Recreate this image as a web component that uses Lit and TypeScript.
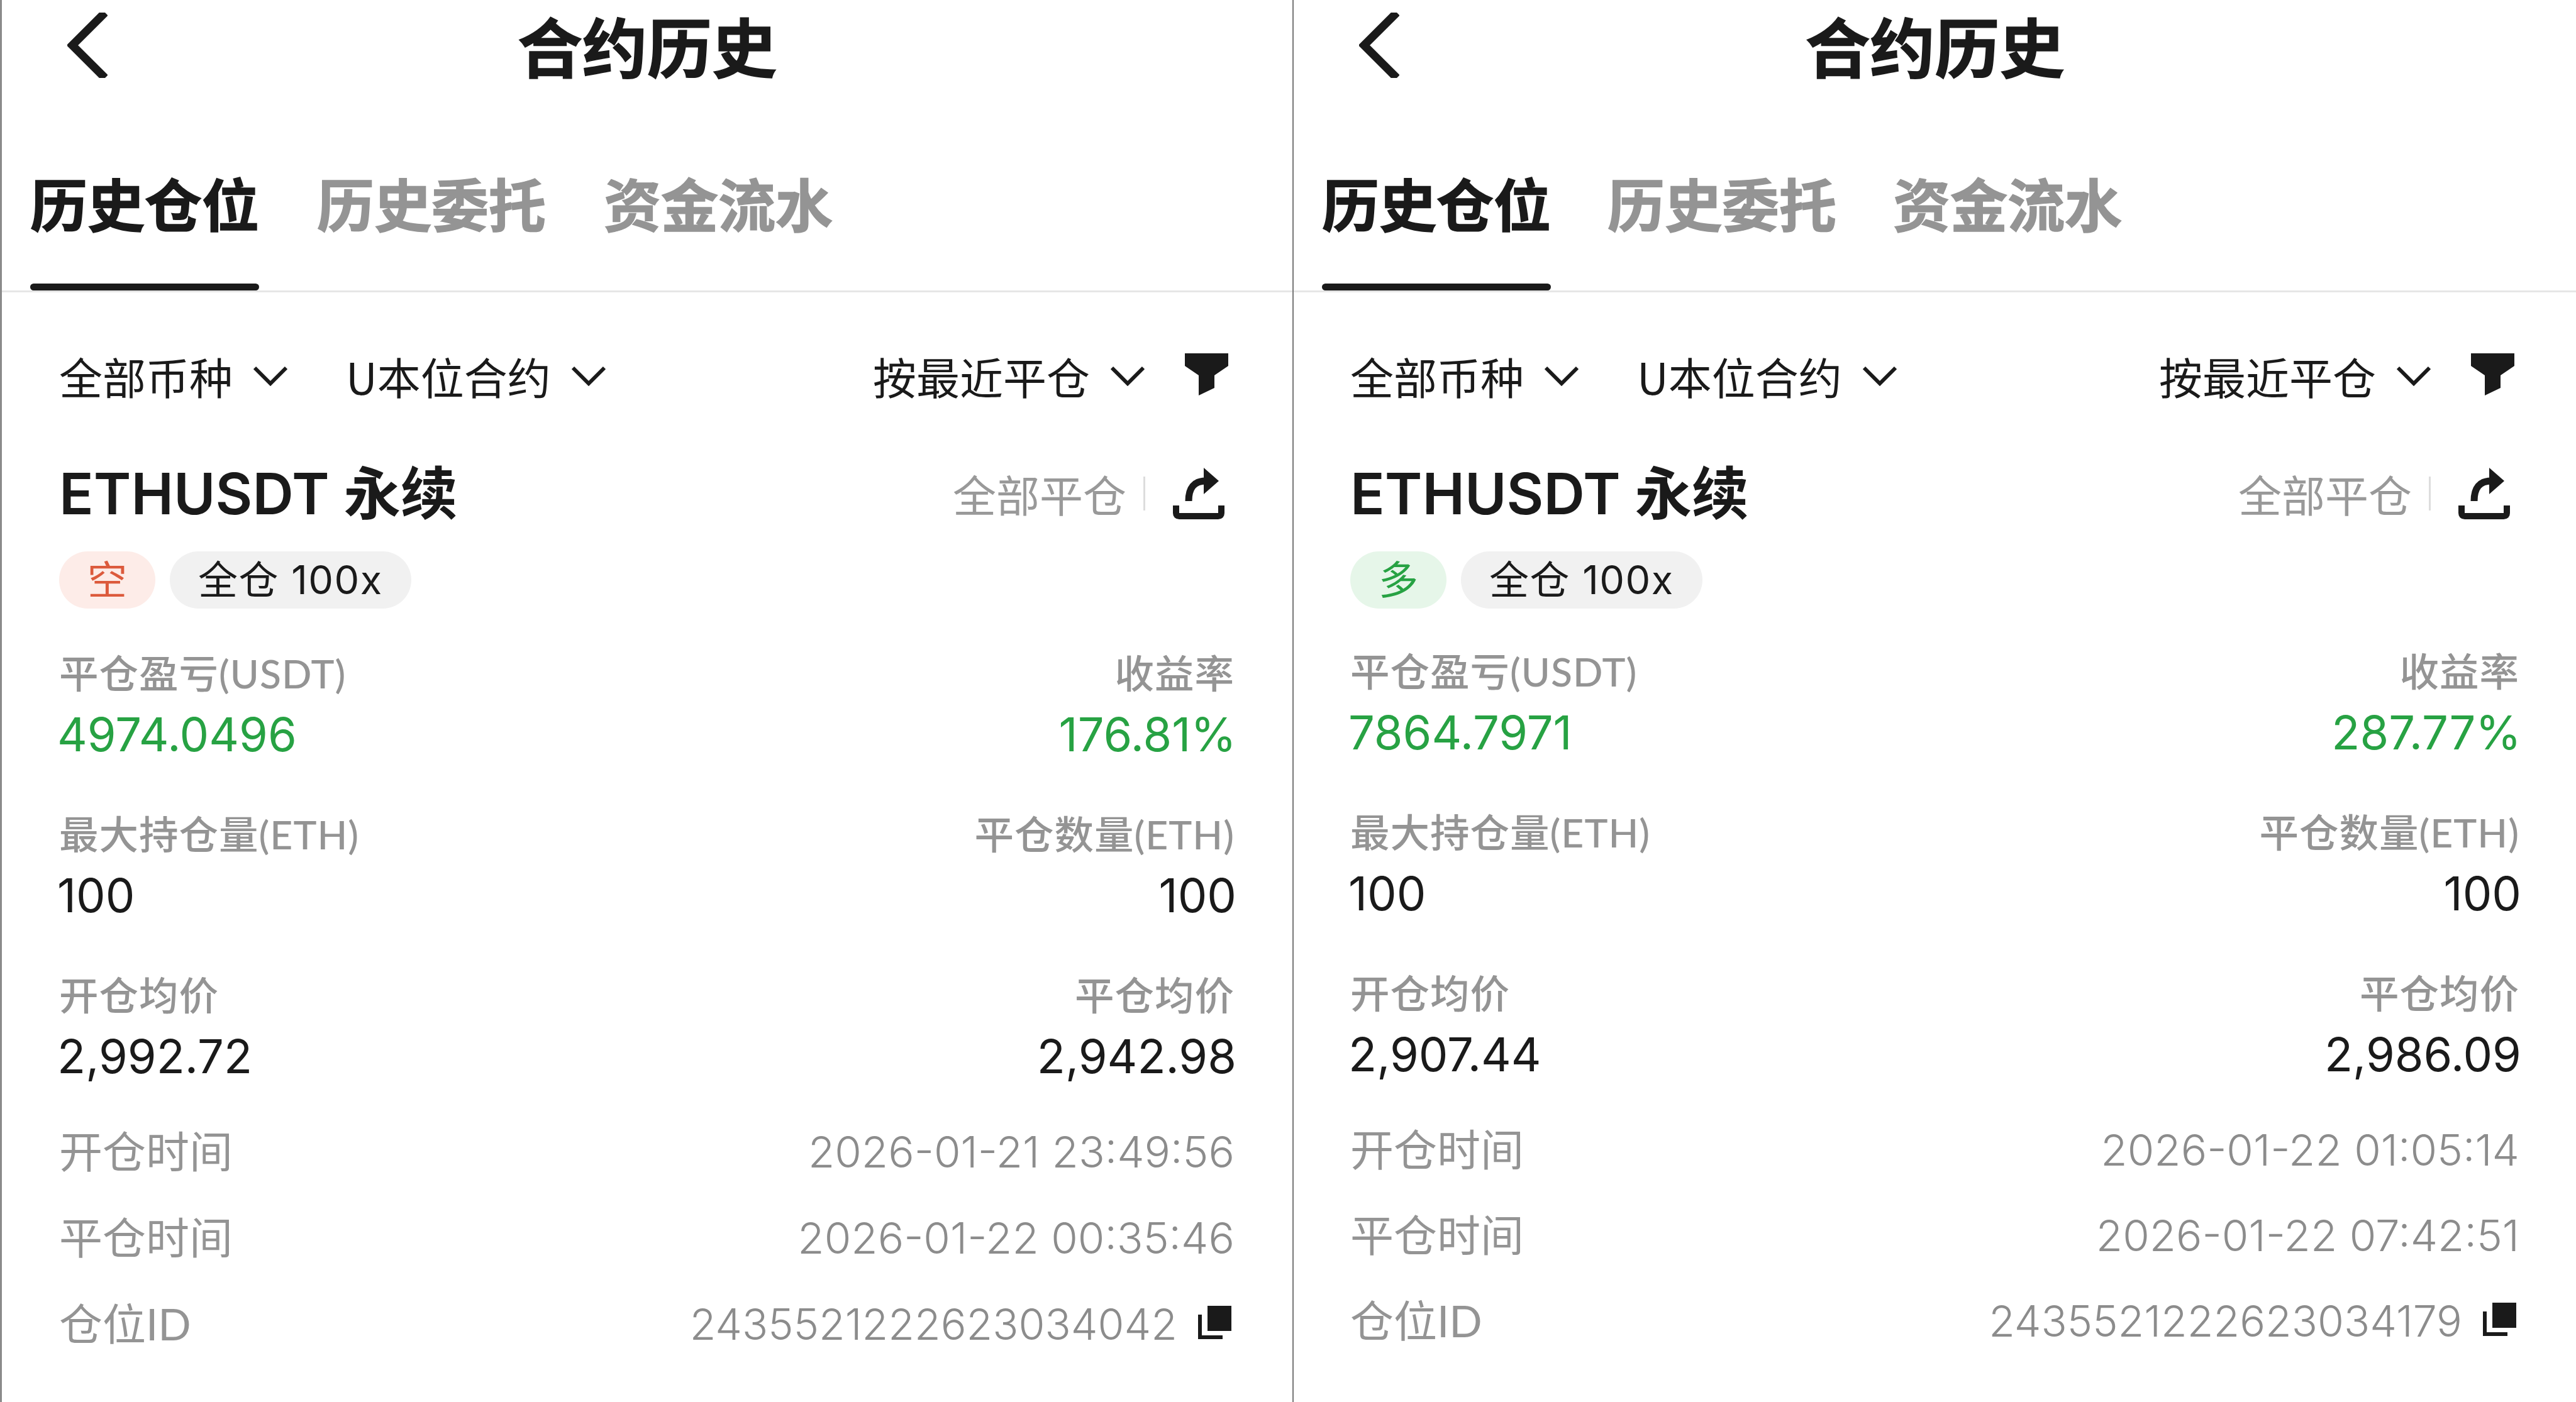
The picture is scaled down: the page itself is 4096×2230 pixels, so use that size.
import { LitElement, html, css, svg } from 'lit';
import { customElement, property } from 'lit/decorators.js';

interface Position {
  side: string;
  long: boolean;
  pnl: string;
  rate: string;
  openAvg: string;
  closeAvg: string;
  openTime: string;
  closeTime: string;
  id: string;
}

const chevron = svg`<path d="M2 3 L27 28 L52 3" fill="none" stroke="#1a1a1a" stroke-width="6"/>`;

@customElement('history-panel')
class HistoryPanel extends LitElement {
  static styles = css`
    :host {
      display: block;
      box-sizing: border-box;
      height: 2230px;
      background: #fff;
      color: #1a1a1a;
      font-family: 'Noto Sans CJK SC', sans-serif;
      overflow: hidden;
    }
    .header {
      display: grid;
      grid-template-columns: 1fr auto 1fr;
      align-items: center;
      height: 144px;
    }
    .back {
      width: 64px;
      height: 104px;
      margin-left: 104px;
    }
    .title {
      font-size: 103px;
      font-weight: 700;
      line-height: 144px;
      -webkit-text-stroke: 1.5px currentColor;
    }
    .tabs {
      display: flex;
      gap: 92px;
      padding-left: 45px;
      border-bottom: 3px solid #e6e6e6;
    }
    .tab {
      position: relative;
      padding: 127px 0 91px;
      font-size: 91px;
      font-weight: 700;
      line-height: 100px;
      color: #949494;
      -webkit-text-stroke: 1.5px currentColor;
    }
    .tab.active {
      color: #1a1a1a;
    }
    .tab.active::after {
      content: '';
      position: absolute;
      left: 0;
      right: 0;
      bottom: 0;
      height: 11px;
      border-radius: 6px;
      background: #1a1a1a;
    }
    .filters {
      display: flex;
      align-items: center;
      margin-top: 93px;
      height: 80px;
      font-size: 69px;
      line-height: 80px;
    }
    .filter {
      display: flex;
      align-items: center;
      gap: 33px;
      margin-right: 93px;
    }
    .filter svg {
      width: 54px;
      height: 32px;
    }
    .spacer {
      flex: 1;
    }
    .filter.sort {
      margin-right: 64px;
      gap: 33px;
    }
    .funnel {
      width: 70px;
      height: 68px;
      margin: -4px 9px 0 0;
    }
    .body {
      padding: 0 92px 0 91px;
    }
    .card-head {
      display: flex;
      align-items: center;
      margin-top: 97px;
      height: 100px;
    }
    .symbol {
      font-family: Inter, 'Noto Sans CJK SC', sans-serif;
      font-size: 90.5px;
      font-weight: 600;
      line-height: 100px;
    }
    .symbol b {
      font-weight: 700;
    }
    .close-all {
      font-size: 69px;
      color: #999;
      line-height: 80px;
    }
    .sep {
      width: 3px;
      height: 54px;
      margin: 0 44px 0 27px;
      background: #ddd;
    }
    .share {
      width: 82px;
      height: 82px;
      margin: 0 16px 0 0;
    }
    .chips {
      display: flex;
      gap: 23px;
      margin-top: 42px;
    }
    .chip {
      box-sizing: border-box;
      height: 91px;
      padding: 0 45px;
      border-radius: 46px;
      background: #f1f1f1;
      font-family: Inter, 'Noto Sans CJK SC', sans-serif;
      font-size: 63px;
      line-height: 91px;
      letter-spacing: 1.5px;
    }
    .chip.side {
      padding: 0 45px;
      letter-spacing: 0;
    }
    .chip.short {
      background: #fdece8;
      color: #dc5a3c;
    }
    .chip.long {
      background: #e6f6e9;
      color: #27a243;
    }
    .stats {
      display: grid;
      grid-template-columns: 1fr 1fr;
      row-gap: 74px;
      margin-top: 63px;
    }
    .stat {
      display: flex;
      flex-direction: column;
      gap: 12px;
    }
    .stat.end {
      align-items: flex-end;
    }
    .label {
      font-family: Lato, 'Noto Sans CJK SC', sans-serif;
      font-size: 62.5px;
      font-weight: 500;
      line-height: 80px;
      letter-spacing: 1px;
      color: #949494;
    }
    .value {
      margin: 0 -3px;
      font-family: Inter, sans-serif;
      font-size: 74px;
      line-height: 90px;
    }
    .value.up {
      color: #27a243;
    }
    .rows {
      display: flex;
      flex-direction: column;
      gap: 57px;
      margin-top: 67px;
    }
    .row {
      display: flex;
      justify-content: space-between;
      align-items: center;
      height: 80px;
    }
    .row .label {
      font-size: 69px;
      font-weight: 400;
      letter-spacing: 0;
    }
    .row .text {
      display: flex;
      align-items: center;
      gap: 33px;
      font-family: Inter, sans-serif;
      font-size: 69px;
      font-weight: 300;
      color: #8c8c8c;
    }
    .row .text.id {
      font-size: 68px;
    }
    .copy {
      width: 53px;
      height: 53px;
      margin: -6px 5px 0 0;
    }
    :host(.alt) .tabs {
      gap: 90px;
    }
    :host(.alt) .body {
      padding: 0 90px 0 90px;
    }
    :host(.alt) .funnel {
      margin-right: 7px;
    }
    :host(.alt) .share {
      margin-right: 15px;
    }
    :host(.alt) .stats {
      margin-top: 60px;
    }
    :host(.alt) .rows {
      gap: 56px;
    }
  `;

  @property({ attribute: false }) data!: Position;

  stat(label: string, value: string, end = false, up = false) {
    return html`<div class="stat ${end ? 'end' : ''}">
      <span class="label">${label}</span>
      <span class="value ${up ? 'up' : ''}">${value}</span>
    </div>`;
  }

  filter(label: string, extra = '') {
    return html`<div class="filter ${extra}">
      <span>${label}</span>
      <svg viewBox="0 0 54 32">${chevron}</svg>
    </div>`;
  }

  render() {
    const d = this.data;
    return html`
      <div class="header">
        <svg class="back" viewBox="0 0 64 104">
          <path d="M60 0 L8 52 L60 104" fill="none" stroke="#1a1a1a" stroke-width="13" />
        </svg>
        <div class="title">合约历史</div>
        <div></div>
      </div>
      <div class="tabs">
        <div class="tab active">历史仓位</div>
        <div class="tab">历史委托</div>
        <div class="tab">资金流水</div>
      </div>
      <div class="body">
        <div class="filters">
          ${this.filter('全部币种')} ${this.filter('U本位合约')}
          <div class="spacer"></div>
          ${this.filter('按最近平仓', 'sort')}
          <svg class="funnel" viewBox="0 0 70 68">
            <path d="M0 0 H69 V20 L47 35 V55 L22 67 V35 L0 20 Z" fill="#1a1a1a" />
          </svg>
        </div>
        <div class="card-head">
          <span class="symbol">ETHUSDT <b>永续</b></span>
          <div class="spacer"></div>
          <span class="close-all">全部平仓</span>
          <div class="sep"></div>
          <svg class="share" viewBox="0 0 82 82" fill="none" stroke="#1a1a1a">
            <path d="M49 0 L73 21 L49 42 Z" fill="#1a1a1a" stroke="none" />
            <path d="M25 53 Q25 21 52 21" stroke-width="11" />
            <path d="M5 60 V72 Q5 77 10 77 H72 Q77 77 77 72 V60" stroke-width="10" />
          </svg>
        </div>
        <div class="chips">
          <span class="chip side ${d.long ? 'long' : 'short'}">${d.side}</span>
          <span class="chip">全仓 100x</span>
        </div>
        <div class="stats">
          ${this.stat('平仓盈亏(USDT)', d.pnl, false, true)}
          ${this.stat('收益率', d.rate, true, true)}
          ${this.stat('最大持仓量(ETH)', '100')}
          ${this.stat('平仓数量(ETH)', '100', true)}
          ${this.stat('开仓均价', d.openAvg)}
          ${this.stat('平仓均价', d.closeAvg, true)}
        </div>
        <div class="rows">
          <div class="row"><span class="label">开仓时间</span><span class="text">${d.openTime}</span></div>
          <div class="row"><span class="label">平仓时间</span><span class="text">${d.closeTime}</span></div>
          <div class="row">
            <span class="label">仓位ID</span>
            <span class="text id">
              ${d.id}
              <svg class="copy" viewBox="0 0 53 53" fill="#1a1a1a">
                <rect x="15" y="0" width="38" height="40" />
                <path d="M3 14 V50 H39" fill="none" stroke="#1a1a1a" stroke-width="6" />
              </svg>
            </span>
          </div>
        </div>
      </div>
    `;
  }
}

@customElement('app-root')
export class AppRoot extends LitElement {
  static styles = css`
    :host {
      display: flex;
      width: 4096px;
      height: 2230px;
      background: #fff;
    }
    history-panel:first-child {
      width: 2055px;
      border-left: 3px solid #8a8a8a;
    }
    history-panel.alt {
      flex: 1;
      border-left: 2px solid #777;
    }
  `;

  left: Position = {
    side: '空',
    long: false,
    pnl: '4974.0496',
    rate: '176.81%',
    openAvg: '2,992.72',
    closeAvg: '2,942.98',
    openTime: '2026-01-21 23:49:56',
    closeTime: '2026-01-22 00:35:46',
    id: '2435521222623034042',
  };

  right: Position = {
    side: '多',
    long: true,
    pnl: '7864.7971',
    rate: '287.77%',
    openAvg: '2,907.44',
    closeAvg: '2,986.09',
    openTime: '2026-01-22 01:05:14',
    closeTime: '2026-01-22 07:42:51',
    id: '2435521222623034179',
  };

  render() {
    return html`
      <history-panel .data=${this.left}></history-panel>
      <history-panel class="alt" .data=${this.right}></history-panel>
    `;
  }
}

export { HistoryPanel };
